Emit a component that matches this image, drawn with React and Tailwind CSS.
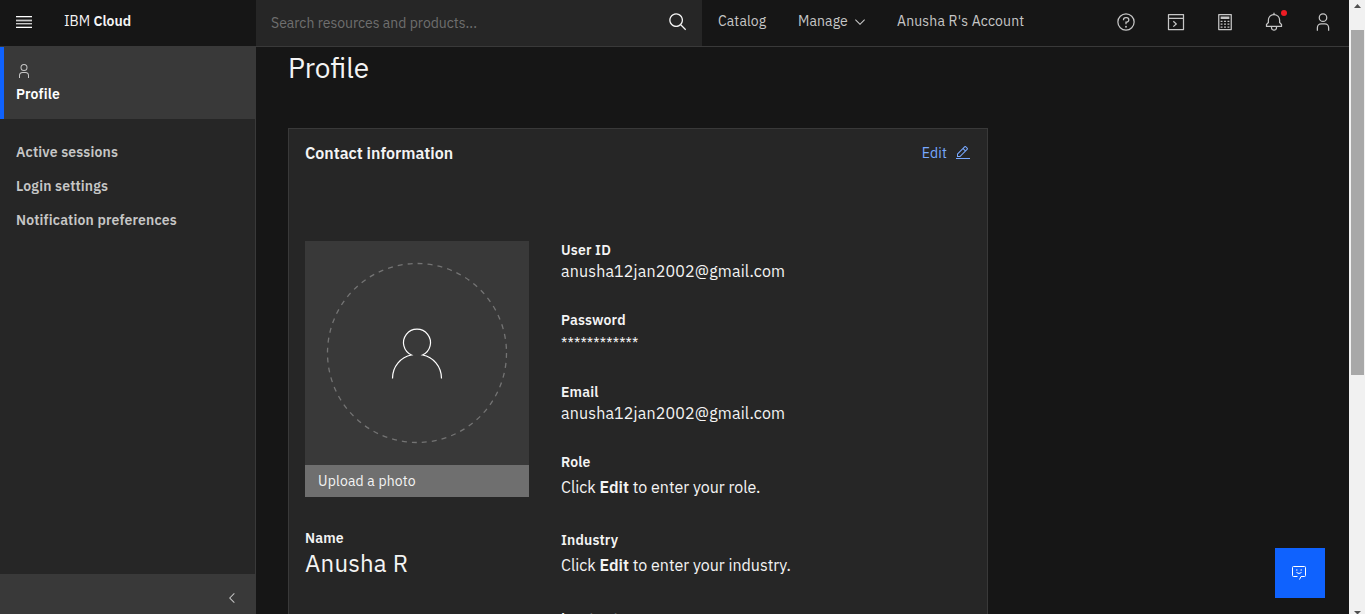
const USER =
  'M16 4a5 5 0 1 1-5 5 5 5 0 0 1 5-5m0-2a7 7 0 1 0 7 7A7 7 0 0 0 16 2ZM26 30H24V25a5 5 0 0 0-5-5H13a5 5 0 0 0-5 5v5H6V25a7 7 0 0 1 7-7h6a7 7 0 0 1 7 7Z';

function Icon({ d, className, children }) {
  return (
    <svg viewBox="0 0 32 32" fill="currentColor" className={className} aria-hidden="true">
      {d && <path d={d} />}
      {children}
    </svg>
  );
}

function MenuIcon() {
  return (
    <svg viewBox="0 0 16 12" className="h-3 w-4" shapeRendering="crispEdges" aria-hidden="true">
      <path fill="#ffffff" d="M0 0h16v1H0zM0 11h16v1H0z" />
      <path fill="#5a5a5a" d="M0 1h16v1H0zM0 3h16v1H0zM0 5h16v1H0zM0 8h16v1H0zM0 10h16v1H0z" />
      <path fill="#c9c9c9" d="M0 4h16v1H0zM0 7h16v1H0z" />
    </svg>
  );
}

function Header() {
  return (
    <header className="flex h-[47px] shrink-0 border-b border-[#393939] bg-[#161616] text-sm leading-[18px] text-[#c6c6c6]">
      <div className="flex w-64 items-center pl-4 pb-[4px]">
        <div className="pt-[2px]"><MenuIcon /></div>
        <div className="ml-8 text-[#f4f4f4]">
          IBM <span className="font-semibold">Cloud</span>
        </div>
      </div>
      <div className="flex w-[446px] items-center justify-between bg-[#262626] pl-[15px] pr-[14px]">
        <span className="pb-px text-[#6f6f6f]">Search resources and products...</span>
        <Icon
          className="mb-[2px] h-5 w-5 text-[#f4f4f4]"
          d="M29,27.5859l-7.5521-7.5521a11.0177,11.0177,0,1,0-1.4141,1.4141L27.5859,29ZM4,13a9,9,0,1,1,9,9A9.01,9.01,0,0,1,4,13Z"
        />
      </div>
      <nav className="flex items-center pb-[4px] pl-4">
        <span className="w-[80px] tracking-[0.1px]">Catalog</span>
        <span className="flex w-[99px] items-center tracking-[0.1px]">
          <span className="w-[54px]">Manage</span>
          <Icon className="mt-[2px] h-4 w-4" d="M16 22L6 12 7.4 10.6 16 19.2 24.6 10.6 26 12z" />
        </span>
        <span className="tracking-[0.16px]">Anusha R's Account</span>
      </nav>
      <div className="ml-auto flex items-center pb-[2px] pr-4">
        <Icon
          className="mr-[30px] h-5 w-5"
          d="M16,2A14,14,0,1,0,30,16,14,14,0,0,0,16,2Zm0,26A12,12,0,1,1,28,16,12,12,0,0,1,16,28ZM17,8H15.5A4.49,4.49,0,0,0,11,12.5V13h2v-.5A2.5,2.5,0,0,1,15.5,10H17a2.5,2.5,0,0,1,0,5H15v4.5h2V17a4.5,4.5,0,0,0,0-9Z"
        >
          <circle cx="16" cy="23.5" r="1.5" />
        </Icon>
        <Icon
          className="mr-[29px] h-5 w-5"
          d="M28,3H4A1,1,0,0,0,3,4V28a1,1,0,0,0,1,1H28a1,1,0,0,0,1-1V4A1,1,0,0,0,28,3ZM27,5V9H5V5ZM5,27V11H27V27ZM12.4 14 11 15.4 15 19 11 22.6 12.4 24 17.8 19z"
        />
        <Icon
          className="mr-[29px] h-5 w-5"
          d="M26,3H6A1,1,0,0,0,5,4V28a1,1,0,0,0,1,1H26a1,1,0,0,0,1-1V4A1,1,0,0,0,26,3ZM25,27H7V5H25ZM9 7h14v4H9zM9 14h3v2H9zM14.500 14h3v2h-3zM20 14h3v2h-3zM9 18.500h3v2H9zM14.500 18.500h3v2h-3zM20 18.500h3v2h-3zM9 23h3v2H9zM14.500 23h3v2h-3zM20 23h3v2h-3z"
        />
        <span className="relative mr-[29px]">
          <Icon
            className="h-5 w-5"
            d="M28.7071,19.293,26,16.5859V13a10.0136,10.0136,0,0,0-9-9.9492V1H15V3.0508A10.0136,10.0136,0,0,0,6,13v3.5859L3.2929,19.293A1,1,0,0,0,3,20v3a1,1,0,0,0,1,1h7v.7768a5.152,5.152,0,0,0,4.5,5.1987A5.0057,5.0057,0,0,0,21,25V24h7a1,1,0,0,0,1-1V20A1,1,0,0,0,28.7071,19.293ZM19,25a3,3,0,0,1-6,0V24h6Zm8-3H5V20.4141L7.707,17.707A1,1,0,0,0,8,17V13a8,8,0,0,1,16,0v4a1,1,0,0,0,.293.707L27,20.4141Z"
          />
          <span className="absolute -top-[2px] left-[17px] h-[6px] w-[6px] rounded-full bg-[#ee1c24]" />
        </span>
        <Icon className="h-5 w-5" d={USER} />
      </div>
    </header>
  );
}

function Sidebar() {
  return (
    <aside className="flex w-64 shrink-0 flex-col bg-[#262626] text-sm font-semibold leading-[18px] text-[#c6c6c6]">
      <div className="h-[72px] border-l-4 border-[#0f62fe] bg-[#393939] pl-3 pt-4">
        <Icon className="h-4 w-4 text-[#c6c6c6]" d={USER} />
        <div className="mt-[6px] tracking-[0.16px] text-white">Profile</div>
      </div>
      <ul className="flex grow flex-col gap-4 border-r border-[#393939] pl-4 pt-6">
        <li className="tracking-[0.16px]">Active sessions</li>
        <li className="tracking-[0.16px]">Login settings</li>
        <li className="tracking-[0.16px]">Notification preferences</li>
      </ul>
      <div className="flex h-10 shrink-0 items-center justify-end bg-[#393939] pr-4 pt-2">
        <Icon className="h-4 w-4" d="M10 16L20 6 21.400 7.400 12.800 16 21.400 24.600 20 26z" />
      </div>
    </aside>
  );
}

function Field({ label, className, children }) {
  return (
    <div className={className}>
      <div className="text-sm font-semibold leading-[18px] tracking-[0.16px]">{label}</div>
      {children}
    </div>
  );
}

function Photo() {
  return (
    <div className="h-64 w-56">
      <svg viewBox="0 0 224 224" className="block h-56 w-56 bg-[#393939]" fill="none" aria-hidden="true">
        <circle cx="112" cy="112" r="89.500" stroke="#747474" strokeWidth="1.300" strokeDasharray="5 5.040" />
        <path
          d="M87.500 137.500C87.500 125 96 116 106.500 114A13.500 13.500 0 1 1 117.500 114C128 116 136.500 125 136.500 137.500"
          stroke="#ffffff"
          strokeWidth="1.200"
        />
      </svg>
      <div className="flex h-8 items-center bg-[#6f6f6f] pl-[13px] text-sm leading-[18px] tracking-[0.16px]">Upload a photo</div>
    </div>
  );
}

function Main() {
  return (
    <main className="relative grow overflow-hidden pl-8">
      <h1 className="pt-[3px] text-[28px] leading-9">Profile</h1>
      <section className="mt-[42px] h-[560px] w-[700px] border border-[#393939] bg-[#262626] px-4 pt-[12px]">
        <div className="flex h-6 items-center justify-between">
          <h2 className="text-base font-semibold leading-6">Contact information</h2>
          <div className="flex items-center gap-2 text-sm leading-[18px] text-[#78a9ff]">
            <span className="tracking-[0.16px]">Edit</span>
            <Icon
              className="h-4 w-4"
              d="M2 26H30V28H2zM25.400 9c.8-.8.8-2 0-2.800l-3.600-3.600c-.8-.8-2-.8-2.800 0l-15 15V24h6.400L25.400 9zM20.400 4L24 7.600l-3 3L17.400 7 20.400 4zM6 22v-3.600l10-10 3.600 3.600-10 10H6z"
            />
          </div>
        </div>
        <div className="mt-[76px] flex gap-8">
          <div className="w-56">
            <Photo />
            <Field label="Name" className="mt-8">
              <div className="text-2xl leading-8 tracking-[0.18px]">Anusha R</div>
            </Field>
          </div>
          <div className="text-base leading-6">
            <Field label="User ID" className="h-[70px]">
              <div className="tracking-[0.16px]">anusha12jan2002@gmail.com</div>
            </Field>
            <Field label="Password" className="h-[72px]">
              <div className="pt-[2px] text-sm leading-6 tracking-[0.16px]">************</div>
            </Field>
            <Field label="Email" className="h-[70px]">
              <div className="tracking-[0.16px]">anusha12jan2002@gmail.com</div>
            </Field>
            <Field label="Role" className="h-[78px]">
              <div className="pt-1">
                Click <span className="font-semibold">Edit</span> to enter your role.
              </div>
            </Field>
            <Field label="Industry" className="h-[78px]">
              <div className="pt-1">
                Click <span className="font-semibold">Edit</span> to enter your industry.
              </div>
            </Field>
            <Field label="Language" />
          </div>
        </div>
      </section>
      <button className="absolute bottom-4 right-6 flex h-[50px] w-[50px] items-center justify-center bg-[#0f62fe]">
        <svg viewBox="0 0 16 16" className="mr-[2px] h-4 w-4" fill="none" stroke="#ffffff" aria-hidden="true">
          <path d="M6.500 11.500H2.500Q1.500 11.500 1.500 10.500V2.500Q1.500 1.500 2.500 1.500H13.500Q14.500 1.500 14.500 2.500V10.500Q14.500 11.500 13.500 11.500H10L8.500 14.500" />
          <path d="M5 5h1.500M9.500 5H11M5.500 7.500Q8 9.500 10.500 7.500" />
        </svg>
      </button>
    </main>
  );
}

function Scrollbar() {
  return (
    <div className="flex h-full w-4 shrink-0 flex-col items-center bg-[#f1f1f1] text-[#505050]">
      <svg viewBox="0 0 16 30" className="h-[30px] w-4" fill="currentColor" aria-hidden="true">
        <path d="M5 8h7L8.500 4z" />
      </svg>
      <div className="ml-px h-[345px] w-[13px] bg-[#a8a8a8]" />
      <svg viewBox="0 0 16 6" className="mt-auto h-[6px] w-4" fill="currentColor" aria-hidden="true">
        <path d="M5 3h7L8.500 6.500z" />
      </svg>
    </div>
  );
}

export default function App() {
  return (
    <div className="flex h-[614px] w-[1365px] overflow-hidden bg-[#161616] font-['IBM_Plex_Sans',Roboto,'Liberation_Sans',sans-serif] text-[#f4f4f4]">
      <div className="flex min-w-0 grow flex-col">
        <Header />
        <div className="flex min-h-0 grow">
          <Sidebar />
          <Main />
        </div>
      </div>
      <Scrollbar />
    </div>
  );
}
